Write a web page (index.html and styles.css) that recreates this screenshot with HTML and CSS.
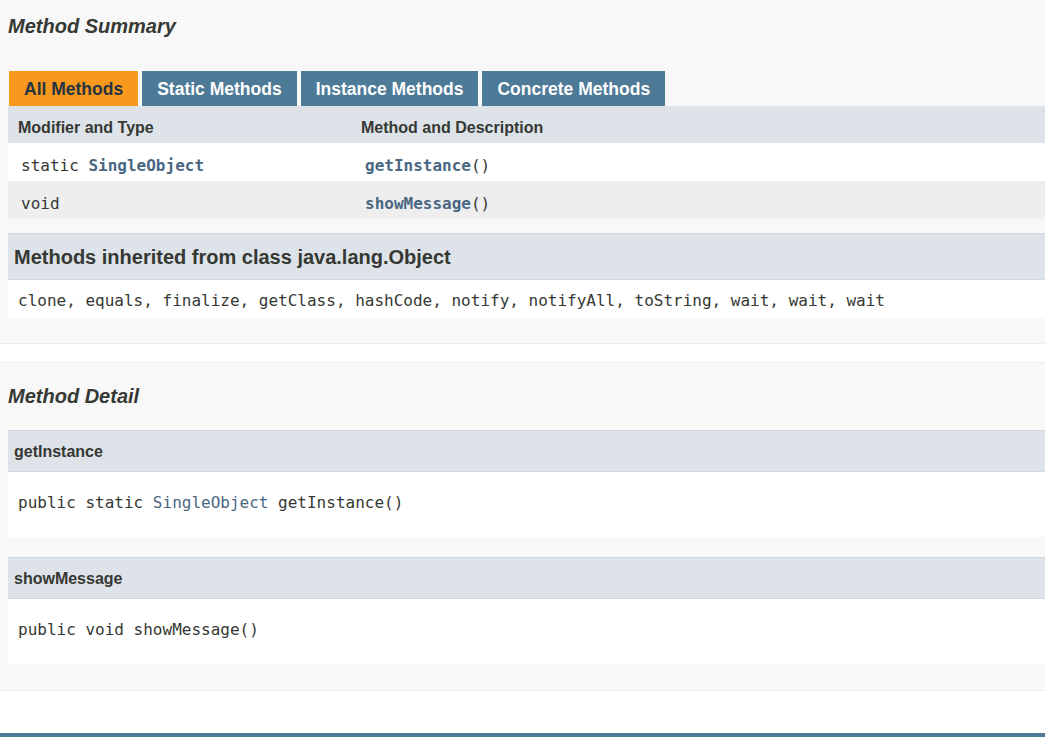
FILE: index.html
```html
<!DOCTYPE html>
<html>
<head>
<meta charset="utf-8">
<link rel="stylesheet" href="styles.css">
</head>
<body>
<section class="block block-summary">
  <h3 class="block-title">Method Summary</h3>
  <div class="tabs">
    <span class="tab tab-active">All Methods</span>
    <span class="tab">Static Methods</span>
    <span class="tab">Instance Methods</span>
    <span class="tab">Concrete Methods</span>
  </div>
  <div class="summary-table">
    <div class="row row-head">
      <div class="cell">Modifier and Type</div>
      <div class="cell">Method and Description</div>
    </div>
    <div class="row row-odd">
      <div class="cell code">static <a class="link strong">SingleObject</a></div>
      <div class="cell code"><a class="link strong">getInstance</a>()</div>
    </div>
    <div class="row row-even">
      <div class="cell code">void</div>
      <div class="cell code"><a class="link strong">showMessage</a>()</div>
    </div>
  </div>
  <div class="inherited">
    <h3 class="inherited-title">Methods inherited from class java.lang.Object</h3>
    <div class="inherited-body code">clone, equals, finalize, getClass, hashCode, notify, notifyAll, toString, wait, wait, wait</div>
  </div>
</section>

<section class="block block-detail">
  <h3 class="block-title">Method Detail</h3>
  <div class="detail">
    <h4 class="detail-title">getInstance</h4>
    <div class="detail-body code">public static <a class="link">SingleObject</a> getInstance()</div>
  </div>
  <div class="detail">
    <h4 class="detail-title">showMessage</h4>
    <div class="detail-body code">public void showMessage()</div>
  </div>
</section>

<div class="bottom-bar"></div>
</body>
</html>
```

FILE: styles.css
```css
html, body {
  margin: 0;
  padding: 0;
}
body {
  background: #ffffff;
  color: #353833;
  font-family: "Liberation Sans", Arial, sans-serif;
  font-size: 14px;
  width: 1045px;
  overflow: hidden;
}
.code {
  font-family: "DejaVu Sans Mono", "Liberation Mono", monospace;
  font-size: 16px;
}
.link {
  color: #4a6782;
  text-decoration: none;
}
.strong {
  font-weight: bold;
}

.block {
  background: #f8f8f8;
  border-bottom: 1px solid #ededed;
  padding: 0 0 25px 8px;
}
.block-summary {
  padding-top: 12px;
}
.block-detail {
  border-top: 1px solid #ededed;
  margin-top: 18px;
  padding-top: 19px;
  padding-bottom: 26px;
}
.block-title {
  margin: 0;
  font-size: 20px;
  line-height: 28px;
  font-style: italic;
  font-weight: bold;
  color: #353833;
}

.tabs {
  display: flex;
  gap: 4px;
  margin-top: 31px;
  padding-left: 1px;
}
.tab {
  display: block;
  height: 35px;
  box-sizing: border-box;
  padding: 2px 15px 0 15px;
  line-height: 33px;
  font-size: 17.5px;
  font-weight: bold;
  color: #ffffff;
  background: #4d7a97;
  white-space: nowrap;
}
.tab-active {
  background: #f8981d;
  color: #253441;
}

.summary-table {
  display: flex;
  flex-direction: column;
}
.row {
  display: grid;
  grid-template-columns: 343px 1fr;
}
.cell {
  padding: 13px 10px 5px 10px;
  line-height: 20px;
}
.row-head {
  background: #dee3e9;
}
.row-head .cell {
  padding: 12px 10px 5px 10px;
  font-size: 16px;
  font-weight: bold;
}
.row-odd {
  background: #ffffff;
}
.row-even {
  background: #eeeeef;
}
.row-odd .cell, .row-even .cell {
  padding-left: 13px;
}
.row-odd .cell + .cell, .row-even .cell + .cell {
  padding-left: 14px;
}

.inherited {
  margin-top: 14px;
  background: #ffffff;
}
.inherited-title {
  margin: 0;
  background: #dee3e9;
  border-top: 1px solid #d0d9e0;
  border-bottom: 1px solid #d0d9e0;
  padding: 11px 6px 10px 6px;
  font-size: 20px;
  line-height: 24px;
  font-weight: bold;
  font-style: normal;
}
.inherited-body {
  padding: 11px 10px 7px 10px;
  line-height: 20px;
}

.detail {
  background: #ffffff;
  margin-top: 20px;
}
.detail-title {
  margin: 0;
  background: #dee3e9;
  border-top: 1px solid #d0d9e0;
  border-bottom: 1px solid #d0d9e0;
  padding: 11px 6px 9px 6px;
  font-size: 16px;
  line-height: 20px;
  font-weight: bold;
}
.detail-body {
  padding: 21px 10px 24px 10px;
  line-height: 20px;
}

.bottom-bar {
  margin-top: 42px;
  height: 20px;
  background: #4d7a97;
}
```
